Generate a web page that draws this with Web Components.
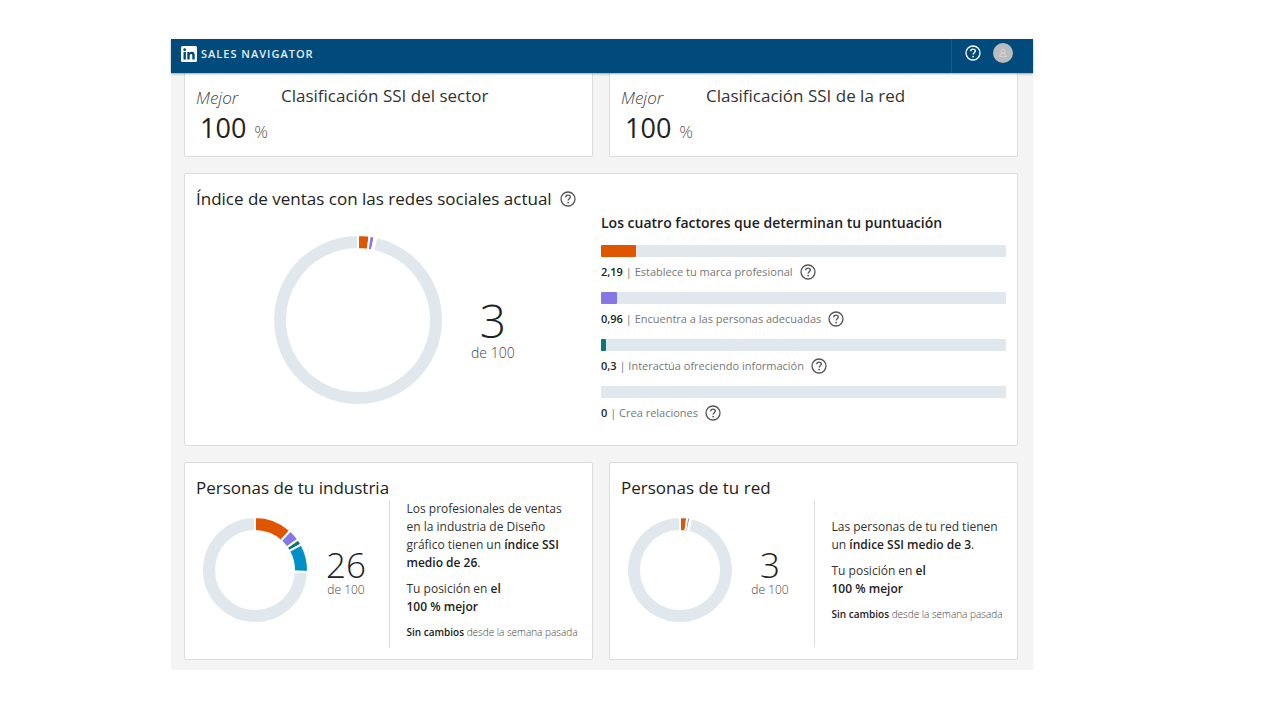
<!DOCTYPE html>
<html lang="es">
<head>
<meta charset="utf-8">
<title>Sales Navigator</title>
<style>
  html { background: #fff; }
  body {
    margin: 0;
    padding: 39px 247px 51px 171px;
    font-family: "Open Sans", "Noto Sans", sans-serif;
    font-size: 12px;
    line-height: 18px;
    color: #333;
  }
</style>
</head>
<body>
<ssi-page></ssi-page>

<script>
const define = (name, html, setup) => {
  const template = document.createElement('template');
  template.innerHTML = html;
  customElements.define(name, class extends HTMLElement {
    constructor() {
      super();
      this.attachShadow({ mode: 'open' }).append(template.content.cloneNode(true));
    }
    connectedCallback() {
      if (setup) setup(this, this.shadowRoot);
    }
  });
};

/* Round question-mark button */
define('help-button', `
  <style>
    :host { display: inline-flex; flex: none; color: #555; }
    button { display: flex; margin: 0; padding: 0; border: 0; background: none; color: inherit; cursor: pointer; }
    svg { display: block; width: 16px; height: 16px; }
  </style>
  <button type="button" aria-label="Ayuda">
    <svg viewBox="0 0 16 16" fill="none" stroke="currentColor">
      <circle cx="8" cy="8" r="7" stroke-width="1.3"/>
      <path d="M5.7 6.3C5.7 4.9 6.7 4.1 8 4.1s2.3.8 2.3 2c0 1.6-2.2 1.7-2.2 3.5" stroke-width="1.4"/>
      <circle cx="8.1" cy="11.6" r=".9" fill="currentColor" stroke="none"/>
    </svg>
  </button>`);

/* Top navigation bar */
define('nav-bar', `
  <style>
    :host { display: flex; align-items: center; height: 34px; padding: 0 20px 0 10px; background: #004b7c; color: #fff; box-shadow: 0 1px 2px rgba(0,0,0,.35); position: relative; }
    a { display: flex; align-items: center; gap: 4px; padding-bottom: 4px; color: #e6eef4; text-decoration: none; font-size: 11px; font-weight: 600; letter-spacing: 1px; }
    a svg { width: 16px; height: 16px; display: block; }
    .tools { margin-left: auto; align-self: stretch; display: flex; align-items: center; gap: 12px; padding: 0 0 6px 13px; border-left: 1px solid #1c5c88; }
    help-button { color: #fff; }
    .avatar { margin: 0; padding: 0; border: 0; width: 20px; height: 20px; border-radius: 50%; background: #b9bbbd; display: grid; place-items: center; }
    .avatar svg { width: 10px; height: 10px; }
  </style>
  <a href="#">
    <svg viewBox="0 0 16 16" aria-hidden="true">
      <rect width="16" height="16" rx="1.5" fill="#fff"/>
      <g fill="#004b7c">
        <circle cx="3.7" cy="3.7" r="1.4"/>
        <rect x="2.5" y="6" width="2.4" height="7.6"/>
        <path d="M6.3 6h2.3v1.05C9 6.3 9.8 5.8 10.9 5.8c2.1 0 2.8 1.3 2.8 3.4v4.4h-2.4V9.7c0-1.1-.3-1.8-1.2-1.8-1 0-1.4.7-1.4 1.8v3.9H6.3z"/>
      </g>
    </svg>
    <span>SALES NAVIGATOR</span>
  </a>
  <div class="tools">
    <help-button></help-button>
    <button class="avatar" type="button" aria-label="Perfil">
      <svg viewBox="0 0 10 10" fill="none" stroke="#d0d2d3" stroke-width="1.1" aria-hidden="true">
        <circle cx="5" cy="3" r="1.7"/><path d="M1.5 8.5c.4-2 1.6-3 3.5-3s3.1 1 3.5 3z"/>
      </svg>
    </button>
  </div>`);

/* White bordered surface */
define('ui-card', `
  <style>
    :host { display: block; box-sizing: border-box; min-width: 0; background: #fff; border: 1px solid #dcdcdc; border-radius: 2px; padding: 13px 11px 11px; }
    :host([flush]) { border-top: 0; border-radius: 0 0 2px 2px; }
  </style>
  <slot></slot>`);

/* Best ranking: percentage and title */
define('rank-summary', `
  <style>
    :host { display: flex; align-items: flex-start; }
    .rank { width: 85px; }
    .best { font-size: 17px; line-height: 24px; font-style: italic; font-weight: 300; color: #444; }
    .value { display: flex; align-items: baseline; gap: 8px; padding-left: 4px; font-size: 27px; line-height: 35px; color: #222; }
    small { font-size: 17px; line-height: 20px; font-weight: 300; color: #555; }
    h2 { margin: 0; font-size: 17px; line-height: 20px; font-weight: 400; color: #333; }
  </style>
  <div class="rank">
    <div class="best">Mejor</div>
    <div class="value"><span>100</span><small>%</small></div>
  </div>
  <h2><slot></slot></h2>`);

/* Ring chart; "values" lists the percentage of each coloured segment */
define('score-ring', `
  <style>
    :host { display: block; flex: none; }
    svg { display: block; overflow: visible; }
  </style>
  <svg role="img" aria-label="Puntuación"></svg>`,
  (host, root) => {
    const r = Number(host.getAttribute('radius'));
    const inner = r - Number(host.getAttribute('thickness'));
    const values = host.getAttribute('values').split(' ').map(Number);
    const colors = ['#e05600', '#8578e6', '#0b7673', '#0090c7'];
    const rest = 100 - values.reduce((a, b) => a + b, 0);
    const point = (radius, pct) => {
      const a = pct / 100 * 2 * Math.PI;
      return (r + radius * Math.sin(a)).toFixed(2) + ' ' + (r - radius * Math.cos(a)).toFixed(2);
    };
    let start = 0;
    let paths = '';
    const slices = values.map((v, i) => [v, colors[i]]);
    slices.push([rest, '#e1e8ed']);
    for (const [v, color] of slices) {
      const end = start + v;
      const big = v > 50 ? 1 : 0;
      paths += `<path fill="${color}" stroke="#fff" stroke-width="2" d="M${point(r, start)}A${r} ${r} 0 ${big} 1 ${point(r, end)}L${point(inner, end)}A${inner} ${inner} 0 ${big} 0 ${point(inner, start)}Z"/>`;
      start = end;
    }
    const svg = root.querySelector('svg');
    svg.setAttribute('width', r * 2);
    svg.setAttribute('height', r * 2);
    svg.innerHTML = paths;
  });

/* Score out of 100 */
define('score-value', `
  <style>
    :host { display: block; flex: none; text-align: center; color: #222; }
    .n { font-size: 35px; line-height: 36px; font-weight: 300; }
    .of { font-size: 12px; line-height: 14px; color: #444; font-weight: 300; }
    :host([large]) .n { font-size: 46px; line-height: 48px; }
    :host([large]) .of { font-size: 14px; line-height: 18px; }
  </style>
  <div class="n"><slot></slot></div>
  <div class="of">de 100</div>`);

/* Factor: progress bar over its labelled value */
define('factor-row', `
  <style>
    :host { display: block; }
    .track { height: 12px; background: #e1e8ed; border-radius: 1px; }
    .fill { height: 12px; border-radius: 1px; }
    .label { display: flex; align-items: center; gap: 7px; height: 29px; font-size: 11px; color: #777; }
    b { font-weight: 600; color: #222; }
  </style>
  <div class="track"><div class="fill"></div></div>
  <div class="label"><span><b></b> | <slot></slot></span><help-button></help-button></div>`,
  (host, root) => {
    const fill = root.querySelector('.fill');
    const value = host.getAttribute('value');
    fill.style.width = Number(value.replace(',', '.')) * 4 + '%';
    fill.style.background = host.getAttribute('color');
    root.querySelector('b').textContent = value;
  });

/* Current index: ring, score and its four factors */
define('index-summary', `
  <style>
    :host { display: grid; grid-template-columns: 405px 1fr; min-height: 247px; }
    h2 { display: flex; align-items: center; gap: 8px; margin: 0; font-size: 17px; line-height: 24px; font-weight: 400; color: #222; }
    .chart { display: flex; align-items: center; gap: 28px; padding: 24px 0 0 77px; }
    score-value { padding-top: 18px; }
    .factors { padding: 24px 0 0; display: flex; flex-direction: column; gap: 6px; }
    h3 { margin: 0 0 4px; font-size: 14px; line-height: 24px; font-weight: 600; color: #222; }
  </style>
  <section>
    <h2>Índice de ventas con las redes sociales actual <help-button></help-button></h2>
    <div class="chart">
      <score-ring radius="85" thickness="14" values="2.19 0.96 0.3"></score-ring>
      <score-value large>3</score-value>
    </div>
  </section>
  <section class="factors">
    <h3>Los cuatro factores que determinan tu puntuación</h3>
    <factor-row value="2,19" color="#e05600">Establece tu marca profesional</factor-row>
    <factor-row value="0,96" color="#8578e6">Encuentra a las personas adecuadas</factor-row>
    <factor-row value="0,3" color="#0b7673">Interactúa ofreciendo información</factor-row>
    <factor-row value="0" color="transparent">Crea relaciones</factor-row>
  </section>`);

/* Comparison with a group of people */
define('people-summary', `
  <style>
    :host { display: block; }
    h2 { margin: 0; font-size: 17px; line-height: 24px; font-weight: 400; color: #222; }
    .row { display: grid; grid-template-columns: 1fr 1fr; min-height: 147px; }
    .chart { display: flex; align-items: flex-start; gap: 18px; padding: 17px 0 0 6px; min-width: 0; }
    score-value { padding-top: 30px; min-width: 38px; }
    .text { display: flex; flex-direction: column; justify-content: center; gap: 8px; box-sizing: border-box; min-width: 0; padding: 0 0 8px 17px; border-left: 1px solid #dcdcdc; }
    p { margin: 0; font-size: 12px; line-height: 18px; }
    .note { font-size: 10px; line-height: 16px; font-weight: 300; color: #444; white-space: nowrap; }
    b { font-weight: 600; color: #222; }
  </style>
  <h2><slot name="title"></slot></h2>
  <div class="row">
    <div class="chart">
      <slot name="ring"></slot>
      <score-value><slot name="score"></slot></score-value>
    </div>
    <div class="text">
      <p><slot></slot></p>
      <p>Tu posición en <b>el<br>100 % mejor</b></p>
      <p class="note"><b>Sin cambios</b> desde la semana pasada</p>
    </div>
  </div>`);

/* Whole dashboard */
define('ssi-page', `
  <style>
    :host { display: block; background: #f4f4f4; }
    main { display: grid; grid-template-columns: 1fr 1fr; gap: 16px; padding: 0 15px 10px 13px; }
    .wide { grid-column: 1 / -1; }
    b { font-weight: 600; color: #222; }
  </style>
  <nav-bar></nav-bar>
  <main>
    <ui-card flush><rank-summary>Clasificación SSI del sector</rank-summary></ui-card>
    <ui-card flush><rank-summary>Clasificación SSI de la red</rank-summary></ui-card>
    <ui-card class="wide"><index-summary></index-summary></ui-card>
    <ui-card>
      <people-summary>
        <span slot="title">Personas de tu industria</span>
        <score-ring slot="ring" radius="53" thickness="14" values="11.6 3.6 1.8 8.6"></score-ring>
        <span slot="score">26</span>
        Los profesionales de ventas<br>en la industria de Diseño<br>gráfico tienen un <b>índice SSI<br>medio de 26</b>.
      </people-summary>
    </ui-card>
    <ui-card>
      <people-summary>
        <span slot="title">Personas de tu red</span>
        <score-ring slot="ring" radius="53" thickness="14" values="2.19 0.96 0.3"></score-ring>
        <span slot="score">3</span>
        Las personas de tu red tienen<br>un <b>índice SSI medio de 3</b>.
      </people-summary>
    </ui-card>
  </main>`);
</script>
</body>
</html>
